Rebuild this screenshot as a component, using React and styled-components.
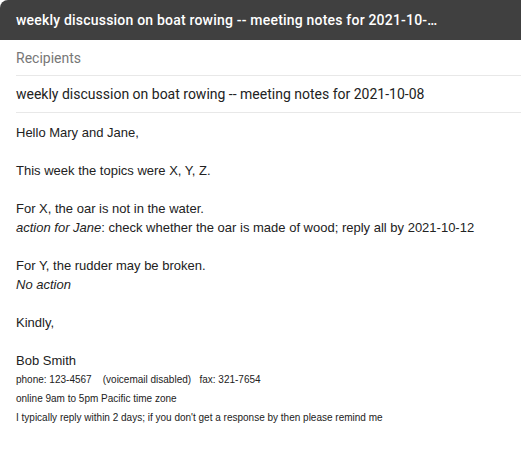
import React from 'react';
import styled, { createGlobalStyle } from 'styled-components';

const GlobalStyle = createGlobalStyle`
    body{
        margin: 0;
        background: #fff;
        font-family: Roboto, "Liberation Sans", Arial, sans-serif;
    }
`;

const ComposeStyled = styled.div`
    width: 521px;
    height: 452px;
    overflow: hidden;
    background: #fff;
`;

const Header = styled.div`
    height: 40px;
    background: #404040;
    border-top-left-radius: 8px;
    display: flex;
    align-items: center;
    padding: 0 16px;
    h1{
        margin: 0;
        color: #fff;
        font-family: Roboto, sans-serif;
        font-size: 14px;
        font-weight: 500;
        letter-spacing: 0.2px;
        white-space: nowrap;
    }
`;

const Field = styled.div`
    margin-left: 16px;
    height: ${props => props.$h}px;
    border-bottom: 1px solid #e8e8e8;
    display: flex;
    align-items: center;
    font-size: 14px;
    color: ${props => props.$muted ? '#777' : '#222'};
`;

const Body = styled.div`
    padding: 10px 16px 0;
    font-family: Arial, "Liberation Sans", sans-serif;
    font-size: 13px;
    line-height: 19px;
    color: #222;
    p{
        margin: 0 0 19px;
    }
    em{
        font-style: italic;
    }
`;

const Signature = styled.div`
    .name{
        font-size: 13px;
    }
    .small{
        font-size: 10px;
        line-height: 19px;
    }
`;

function App() {
    const subject = 'weekly discussion on boat rowing -- meeting notes for 2021-10-08'

    return(
        <>
            <GlobalStyle />
            <ComposeStyled>
                <Header>
                    <h1>weekly discussion on boat rowing -- meeting notes for 2021-10-…</h1>
                </Header>
                <Field $h={35} $muted>Recipients</Field>
                <Field $h={36}>{subject}</Field>
                <Body>
                    <p>Hello Mary and Jane,</p>
                    <p>This week the topics were X, Y, Z.</p>
                    <p>
                        For X, the oar is not in the water.<br />
                        <em>action for Jane</em>: check whether the oar is made of wood; reply all by 2021-10-12
                    </p>
                    <p>
                        For Y, the rudder may be broken.<br />
                        <em>No action</em>
                    </p>
                    <p>Kindly,</p>
                    <Signature>
                        <div className='name'>Bob Smith</div>
                        <div className='small'>phone: 123-4567&nbsp;&nbsp;&nbsp;&nbsp;(voicemail disabled)&nbsp;&nbsp;&nbsp;fax: 321-7654</div>
                        <div className='small'>online 9am to 5pm Pacific time zone</div>
                        <div className='small'>I typically reply within 2 days; if you don't get a response by then please remind me</div>
                    </Signature>
                </Body>
            </ComposeStyled>
        </>
    )
}

export default App;
